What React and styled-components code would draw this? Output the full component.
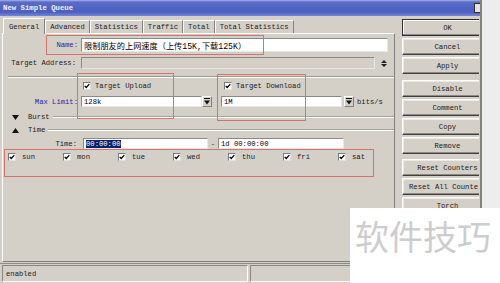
import React from "react";
import styled, { createGlobalStyle } from "styled-components";

const GlobalStyle = createGlobalStyle`
  html, body { margin: 0; padding: 0; background: #ededed; }
  body {
    font-family: "Liberation Mono", "Courier New", monospace;
    font-size: 7.2px;
    color: #1a1a1a;
  }
  * { box-sizing: border-box; }
`;

const Page = styled.div`
  position: relative;
  width: 500px;
  height: 283px;
  overflow: hidden;
  background: #ededed;
`;

const Window = styled.div`
  width: 482px;
  height: 283px;
  background: #d4d0c8;
  display: flex;
  flex-direction: column;
  border-right: 2px solid #85827a;
`;

const TitleBar = styled.div`
  height: 16px;
  flex-shrink: 0;
  display: flex;
  align-items: center;
  justify-content: space-between;
  padding-left: 3px;
  overflow: hidden;
  background: linear-gradient(to bottom, #a9b4e2 0, #5a6cc8 2px, #4b5fc2 12px, #7386d4 16px);
  color: #f2f2ff;
  font-weight: bold;
  font-size: 7.3px;
`;

const CloseBox = styled.div`
  flex-shrink: 0;
  width: 14px;
  height: 10px;
  margin-right: -8px;
  background: #e4e2dc;
  border: 1px solid #303030;
`;

const Main = styled.div`
  flex: 1;
  display: flex;
  padding-left: 2px;
  min-height: 0;
`;

const LeftCol = styled.div`
  width: 393px;
  display: flex;
  flex-direction: column;
  padding-top: 2px;
`;

const TabRow = styled.div`
  display: flex;
  align-items: flex-end;
  height: 15px;
  padding-left: 1px;
  position: relative;
  z-index: 1;
`;

const Tab = styled.div`
  height: ${(p) => (p.$active ? 16 : 13)}px;
  margin-bottom: ${(p) => (p.$active ? -1 : 0)}px;
  padding: 0 ${(p) => (p.$active ? 5 : 4)}px;
  display: flex;
  align-items: center;
  background: #d4d0c8;
  border-top: 1px solid #ffffff;
  border-left: 1px solid #ffffff;
  border-right: 1px solid #808080;
  white-space: nowrap;
`;

const Panel = styled.div`
  height: 229px;
  border: 1px solid;
  border-color: #ffffff #808080 #808080 #ffffff;
  display: flex;
  flex-direction: column;
`;

const FieldRow = styled.div`
  display: grid;
  grid-template-columns: 75px 1fr;
  column-gap: 3px;
  align-items: center;
  height: ${(p) => p.$h}px;
  margin-top: ${(p) => p.$mt}px;
`;

const Label = styled.span`
  text-align: right;
  white-space: nowrap;
  color: ${(p) => (p.$blue ? "#2424a6" : "inherit")};
  padding-right: ${(p) => (p.$pr ? p.$pr : 0)}px;
`;

const Line = styled.div`
  display: flex;
  align-items: center;
  height: 100%;
  padding-left: ${(p) => p.$pl || 0}px;
`;

const Input = styled.div`
  width: ${(p) => p.$w}px;
  height: 100%;
  flex-shrink: 0;
  margin-left: ${(p) => p.$ml || 0}px;
  display: flex;
  align-items: center;
  padding-left: 2px;
  overflow: hidden;
  white-space: nowrap;
  color: #000;
  background: ${(p) => (p.$disabled ? "#d4d0c8" : "#ffffff")};
  border: 1px solid;
  border-color: #8a8a8a #e6e6e6 #e6e6e6 #8a8a8a;
`;

const CjkText = styled.span`
  font-family: "Liberation Mono", "Noto Sans CJK SC", monospace;
  font-size: 8.2px;
  color: #000;
`;

const Selected = styled.span`
  background: #0a246a;
  color: #ffffff;
`;

const Spin = styled.div`
  width: ${(p) => p.$w}px;
  height: 100%;
  flex-shrink: 0;
  margin-left: ${(p) => p.$ml || 0}px;
  display: flex;
  align-items: center;
  justify-content: center;
  background: #d4d0c8;
  border: ${(p) => (p.$flat ? "none" : "1px solid")};
  border-color: #ffffff #808080 #808080 #ffffff;
`;

const Unit = styled.span`
  margin-left: ${(p) => p.$ml}px;
  white-space: nowrap;
`;

const Dash = styled.span`
  width: 10px;
  text-align: center;
`;

const Separator = styled.div`
  margin-top: ${(p) => p.$mt}px;
  margin-left: 5px;
  height: 2px;
  border-top: 1px solid #9a978f;
  border-bottom: 1px solid #ffffff;
`;

const CheckCell = styled.div`
  width: ${(p) => p.$w}px;
  padding-left: 2px;
  display: flex;
  align-items: center;
`;

const CheckItem = styled.div`
  display: flex;
  align-items: center;
  width: ${(p) => (p.$w ? `${p.$w}px` : "auto")};
  flex-shrink: 0;
`;

const Box = styled.span`
  width: 8px;
  height: 8px;
  flex-shrink: 0;
  background: #ffffff;
  border: 1px solid;
  border-color: #7a7a7a #e0e0e0 #e0e0e0 #7a7a7a;
  display: flex;
  align-items: center;
  justify-content: center;
`;

const CheckText = styled.span`
  margin-left: ${(p) => p.$ml}px;
  white-space: nowrap;
`;

const SectionHeader = styled.div`
  display: flex;
  align-items: center;
  height: 10px;
  margin-top: ${(p) => p.$mt}px;
  padding-left: 9px;
`;

const SectionTitle = styled.span`
  margin-left: 9px;
  white-space: nowrap;
`;

const Rule = styled.div`
  flex: 1;
  margin-left: 3px;
  height: 2px;
  border-top: 1px solid #a6a39b;
  border-bottom: 1px solid #ffffff;
`;

const DaysRow = styled.div`
  display: flex;
  align-items: center;
  height: 10px;
  margin-top: 3px;
  padding-left: 5px;
`;

const ButtonCol = styled.div`
  width: 77px;
  margin-left: 7px;
  padding-top: 3px;
  display: flex;
  flex-direction: column;
  gap: 2px;
  overflow: hidden;
`;

const Btn = styled.div`
  width: 91px;
  height: 17px;
  flex-shrink: 0;
  margin-top: ${(p) => p.$mt || 0}px;
  display: flex;
  align-items: center;
  justify-content: ${(p) => (p.$left ? "flex-start" : "center")};
  padding-left: ${(p) => (p.$left ? 6 : 0)}px;
  white-space: nowrap;
  background: #d4d0c8;
  border: 1px solid;
  border-color: ${(p) =>
    p.$default ? "#303030 #303030 #303030 #303030" : "#ffffff #404040 #404040 #ffffff"};
  box-shadow: inset -1px -1px 0 #8c8a84, inset 1px 1px 0 ${(p) => (p.$default ? "#ffffff" : "#ece9e3")};
`;

const StatusBar = styled.div`
  height: 20px;
  flex-shrink: 0;
  display: flex;
  gap: 2px;
  padding: 1px 0 0 2px;
  border-top: 1px solid #8f8b83;
`;

const StatusCell = styled.div`
  height: 17px;
  width: ${(p) => (p.$w ? `${p.$w}px` : "auto")};
  flex: ${(p) => (p.$w ? "0 0 auto" : "1")};
  padding-left: 3px;
  display: flex;
  align-items: center;
  border: 1px solid;
  border-color: #8a877f #ffffff #ffffff #8a877f;
`;

const Annotation = styled.div`
  position: absolute;
  border: 1.5px solid #d6736b;
  pointer-events: none;
`;

const Watermark = styled.div`
  position: absolute;
  left: 350px;
  top: 208px;
  width: 150px;
  height: 75px;
  background: #ffffff;
  padding: 8px 0 0 5px;
  font-family: "Noto Sans CJK SC", sans-serif;
  font-size: 34px;
  line-height: 1.2;
  color: #cdcdcd;
  white-space: nowrap;
`;

const Check = () => (
  <Box>
    <svg width="7" height="6" viewBox="0 0 7 6">
      <path d="M0.8 2.8 L2.6 4.8 L6.2 0.8" fill="none" stroke="#000" strokeWidth="1.5" />
    </svg>
  </Box>
);

const DropIcon = () => (
  <svg width="6" height="7" viewBox="0 0 6 7">
    <rect x="0" y="0" width="6" height="1" fill="#111" />
    <path d="M0 2.5h6L3 6.5z" fill="#111" />
  </svg>
);

const UpDownIcon = () => (
  <svg width="6" height="9" viewBox="0 0 6 9">
    <path d="M0 4h6L3 1z M0 5h6L3 8z" fill="#222" />
  </svg>
);

const TriDown = () => (
  <svg width="7" height="5" viewBox="0 0 7 5">
    <path d="M0 0h7L3.5 5z" fill="#111" />
  </svg>
);

const TriUp = () => (
  <svg width="7" height="5" viewBox="0 0 7 5">
    <path d="M0 5h7L3.5 0z" fill="#111" />
  </svg>
);

const tabs = ["General", "Advanced", "Statistics", "Traffic", "Total", "Total Statistics"];
const days = ["sun", "mon", "tue", "wed", "thu", "fri", "sat"];
const buttons = [
  { t: "OK", def: true },
  { t: "Cancel" },
  { t: "Apply" },
  { t: "Disable", mt: 4 },
  { t: "Comment" },
  { t: "Copy" },
  { t: "Remove" },
  { t: "Reset Counters", mt: 3 },
  { t: "Reset All Counte", left: true },
  { t: "Torch" },
];

export default function App() {
  return (
    <Page>
      <GlobalStyle />
      <Window>
        <TitleBar>
          <span>New Simple Queue</span>
          <CloseBox />
        </TitleBar>
        <Main>
          <LeftCol>
            <TabRow>
              {tabs.map((t, i) => (
                <Tab key={t} $active={i === 0}>
                  {t}
                </Tab>
              ))}
            </TabRow>
            <Panel>
              <FieldRow $h={13} $mt={4}>
                <Label $blue>Name:</Label>
                <Line>
                  <Input $w={307}>
                    <CjkText>限制朋友的上网速度（上传15K,下载125K）</CjkText>
                  </Input>
                </Line>
              </FieldRow>
              <FieldRow $h={12} $mt={6}>
                <Label $pr={2}>Target Address:</Label>
                <Line>
                  <Input $w={294} $disabled />
                  <Spin $w={9} $ml={4} $flat>
                    <UpDownIcon />
                  </Spin>
                </Line>
              </FieldRow>
              <Separator $mt={7} />
              <FieldRow $h={10} $mt={3}>
                <span />
                <Line>
                  <CheckCell $w={141}>
                    <Check />
                    <CheckText $ml={4}>Target Upload</CheckText>
                  </CheckCell>
                  <CheckCell $w={120}>
                    <Check />
                    <CheckText $ml={4}>Target Download</CheckText>
                  </CheckCell>
                </Line>
              </FieldRow>
              <FieldRow $h={11} $mt={5}>
                <Label $blue>Max Limit:</Label>
                <Line>
                  <Input $w={121}>128k</Input>
                  <Spin $w={10}>
                    <DropIcon />
                  </Spin>
                  <Input $w={121} $ml={9}>
                    1M
                  </Input>
                  <Spin $w={10} $ml={2}>
                    <DropIcon />
                  </Spin>
                  <Unit $ml={3}>bits/s</Unit>
                </Line>
              </FieldRow>
              <SectionHeader $mt={5}>
                <TriDown />
                <SectionTitle>Burst</SectionTitle>
                <Rule />
              </SectionHeader>
              <SectionHeader $mt={3}>
                <TriUp />
                <SectionTitle>Time</SectionTitle>
                <Rule />
              </SectionHeader>
              <FieldRow $h={11} $mt={3}>
                <Label $pr={1}>Time:</Label>
                <Line $pl={2}>
                  <Input $w={125}>
                    <Selected>00:00:00</Selected>
                  </Input>
                  <Dash>-</Dash>
                  <Input $w={126}>1d 00:00:00</Input>
                </Line>
              </FieldRow>
              <DaysRow>
                {days.map((d) => (
                  <CheckItem key={d} $w={55}>
                    <Check />
                    <CheckText $ml={6}>{d}</CheckText>
                  </CheckItem>
                ))}
              </DaysRow>
            </Panel>
          </LeftCol>
          <ButtonCol>
            {buttons.map((b) => (
              <Btn key={b.t} $default={b.def} $mt={b.mt} $left={b.left}>
                {b.t}
              </Btn>
            ))}
          </ButtonCol>
        </Main>
        <StatusBar>
          <StatusCell $w={246}>enabled</StatusCell>
          <StatusCell />
        </StatusBar>
      </Window>
      <Annotation style={{ left: 46, top: 35, width: 218, height: 20 }} />
      <Annotation style={{ left: 77, top: 73, width: 97, height: 46 }} />
      <Annotation style={{ left: 217, top: 74, width: 89, height: 47 }} />
      <Annotation style={{ left: 4, top: 149, width: 370, height: 28 }} />
      <Watermark>软件技巧</Watermark>
    </Page>
  );
}
